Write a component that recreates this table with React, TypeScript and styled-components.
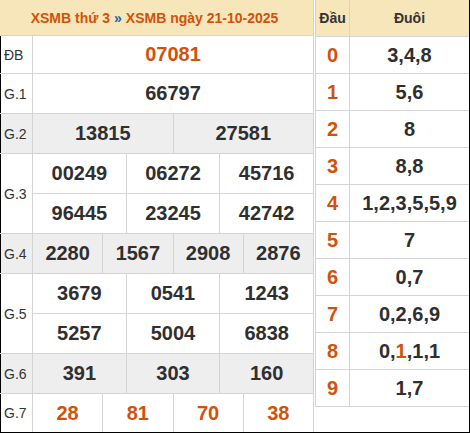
import React from "react";
import styled, { createGlobalStyle } from "styled-components";

const Global = createGlobalStyle`
  html, body { margin: 0; padding: 0; background: #fff; }
  body { font-family: "Liberation Sans", Arial, sans-serif; }
`;

const ORANGE = "#d2520a";
const DARK = "#2f2f2f";
const BEIGE = "#f7e6ba";
const GRAY = "#eeeeee";
const LINE = "#d4d4d4";

const Wrapper = styled.div`
  width: 470px;
  height: 433px;
  box-sizing: border-box;
  border-right: 1px solid #000;
  border-bottom: 1px solid #000;
  display: flex;
  align-items: flex-start;
  gap: 1px;
  background: #fff;
`;

const LeftPanel = styled.div`
  width: 314px;
  box-sizing: border-box;
  border-right: 1px solid ${LINE};
  display: grid;
  grid-template-columns: 32px repeat(12, 1fr);
  grid-template-rows: 35px 37px repeat(8, 39px) 38px;
  gap: 1px;
  background: ${LINE};
`;

const TitleCell = styled.div`
  grid-column: 1 / -1;
  background: ${BEIGE};
  display: flex;
  align-items: center;
  justify-content: center;
  gap: 4px;
  font-weight: bold;
  font-size: 14px;
  color: ${ORANGE};
  padding-right: 4px;
`;

const Sep = styled.span`
  color: #1f5fae;
`;

const Label = styled.div<{ $rows?: number; $alt?: boolean }>`
  grid-column: 1;
  grid-row: span ${(p) => p.$rows ?? 1};
  border-left: 1px solid #000;
  background: ${(p) => (p.$alt ? GRAY : "#fff")};
  display: flex;
  align-items: center;
  padding-left: 3px;
  font-size: 14px;
  color: #333;
`;

const Num = styled.div<{ $span: number; $alt?: boolean; $hot?: boolean }>`
  grid-column: span ${(p) => p.$span};
  background: ${(p) => (p.$alt ? GRAY : "#fff")};
  display: flex;
  align-items: center;
  justify-content: center;
  font-weight: bold;
  font-size: 20px;
  color: ${(p) => (p.$hot ? ORANGE : DARK)};
`;

const RightPanel = styled.div`
  width: 154px;
  box-sizing: border-box;
  border-left: 1px solid ${LINE};
  border-bottom: 1px solid ${LINE};
  display: grid;
  grid-template-columns: 33px 1fr;
  grid-template-rows: 36px repeat(10, 36px);
  gap: 1px;
  background: ${LINE};
`;

const HeadCell = styled.div`
  background: ${BEIGE};
  display: flex;
  align-items: center;
  justify-content: center;
  font-weight: bold;
  font-size: 14px;
  color: #333;
`;

const HeadDigit = styled.div`
  background: #fff;
  display: flex;
  align-items: center;
  justify-content: center;
  font-weight: bold;
  font-size: 20px;
  color: ${ORANGE};
`;

const Tail = styled.div`
  background: #fff;
  display: flex;
  align-items: center;
  justify-content: center;
  font-weight: bold;
  font-size: 20px;
  color: ${DARK};
`;

const Hot = styled.span`
  color: ${ORANGE};
`;

type Row = { label: string; nums: string[][]; alt?: boolean; hot?: boolean };

const rows: Row[] = [
  { label: "ĐB", nums: [["07081"]], hot: true },
  { label: "G.1", nums: [["66797"]] },
  { label: "G.2", nums: [["13815", "27581"]], alt: true },
  { label: "G.3", nums: [["00249", "06272", "45716"], ["96445", "23245", "42742"]] },
  { label: "G.4", nums: [["2280", "1567", "2908", "2876"]], alt: true },
  { label: "G.5", nums: [["3679", "0541", "1243"], ["5257", "5004", "6838"]] },
  { label: "G.6", nums: [["391", "303", "160"]], alt: true },
  { label: "G.7", nums: [["28", "81", "70", "38"]], hot: true },
];

const tails: React.ReactNode[] = [
  "3,4,8",
  "5,6",
  "8",
  "8,8",
  "1,2,3,5,5,9",
  "7",
  "0,7",
  "0,2,6,9",
  <>0,<Hot>1</Hot>,1,1</>,
  "1,7",
];

export default function App() {
  return (
    <>
      <Global />
      <Wrapper>
        <LeftPanel>
          <TitleCell>
            <span>XSMB thứ 3</span>
            <Sep>»</Sep>
            <span>XSMB ngày 21-10-2025</span>
          </TitleCell>
          {rows.map((r) => (
            <React.Fragment key={r.label}>
              <Label $rows={r.nums.length} $alt={r.alt}>
                {r.label}
              </Label>
              {r.nums.map((line) =>
                line.map((n, i) => (
                  <Num key={n + i} $span={12 / line.length} $alt={r.alt} $hot={r.hot}>
                    {n}
                  </Num>
                ))
              )}
            </React.Fragment>
          ))}
        </LeftPanel>
        <RightPanel>
          <HeadCell>Đầu</HeadCell>
          <HeadCell>Đuôi</HeadCell>
          {tails.map((t, i) => (
            <React.Fragment key={i}>
              <HeadDigit>{i}</HeadDigit>
              <Tail>{t}</Tail>
            </React.Fragment>
          ))}
        </RightPanel>
      </Wrapper>
    </>
  );
}
